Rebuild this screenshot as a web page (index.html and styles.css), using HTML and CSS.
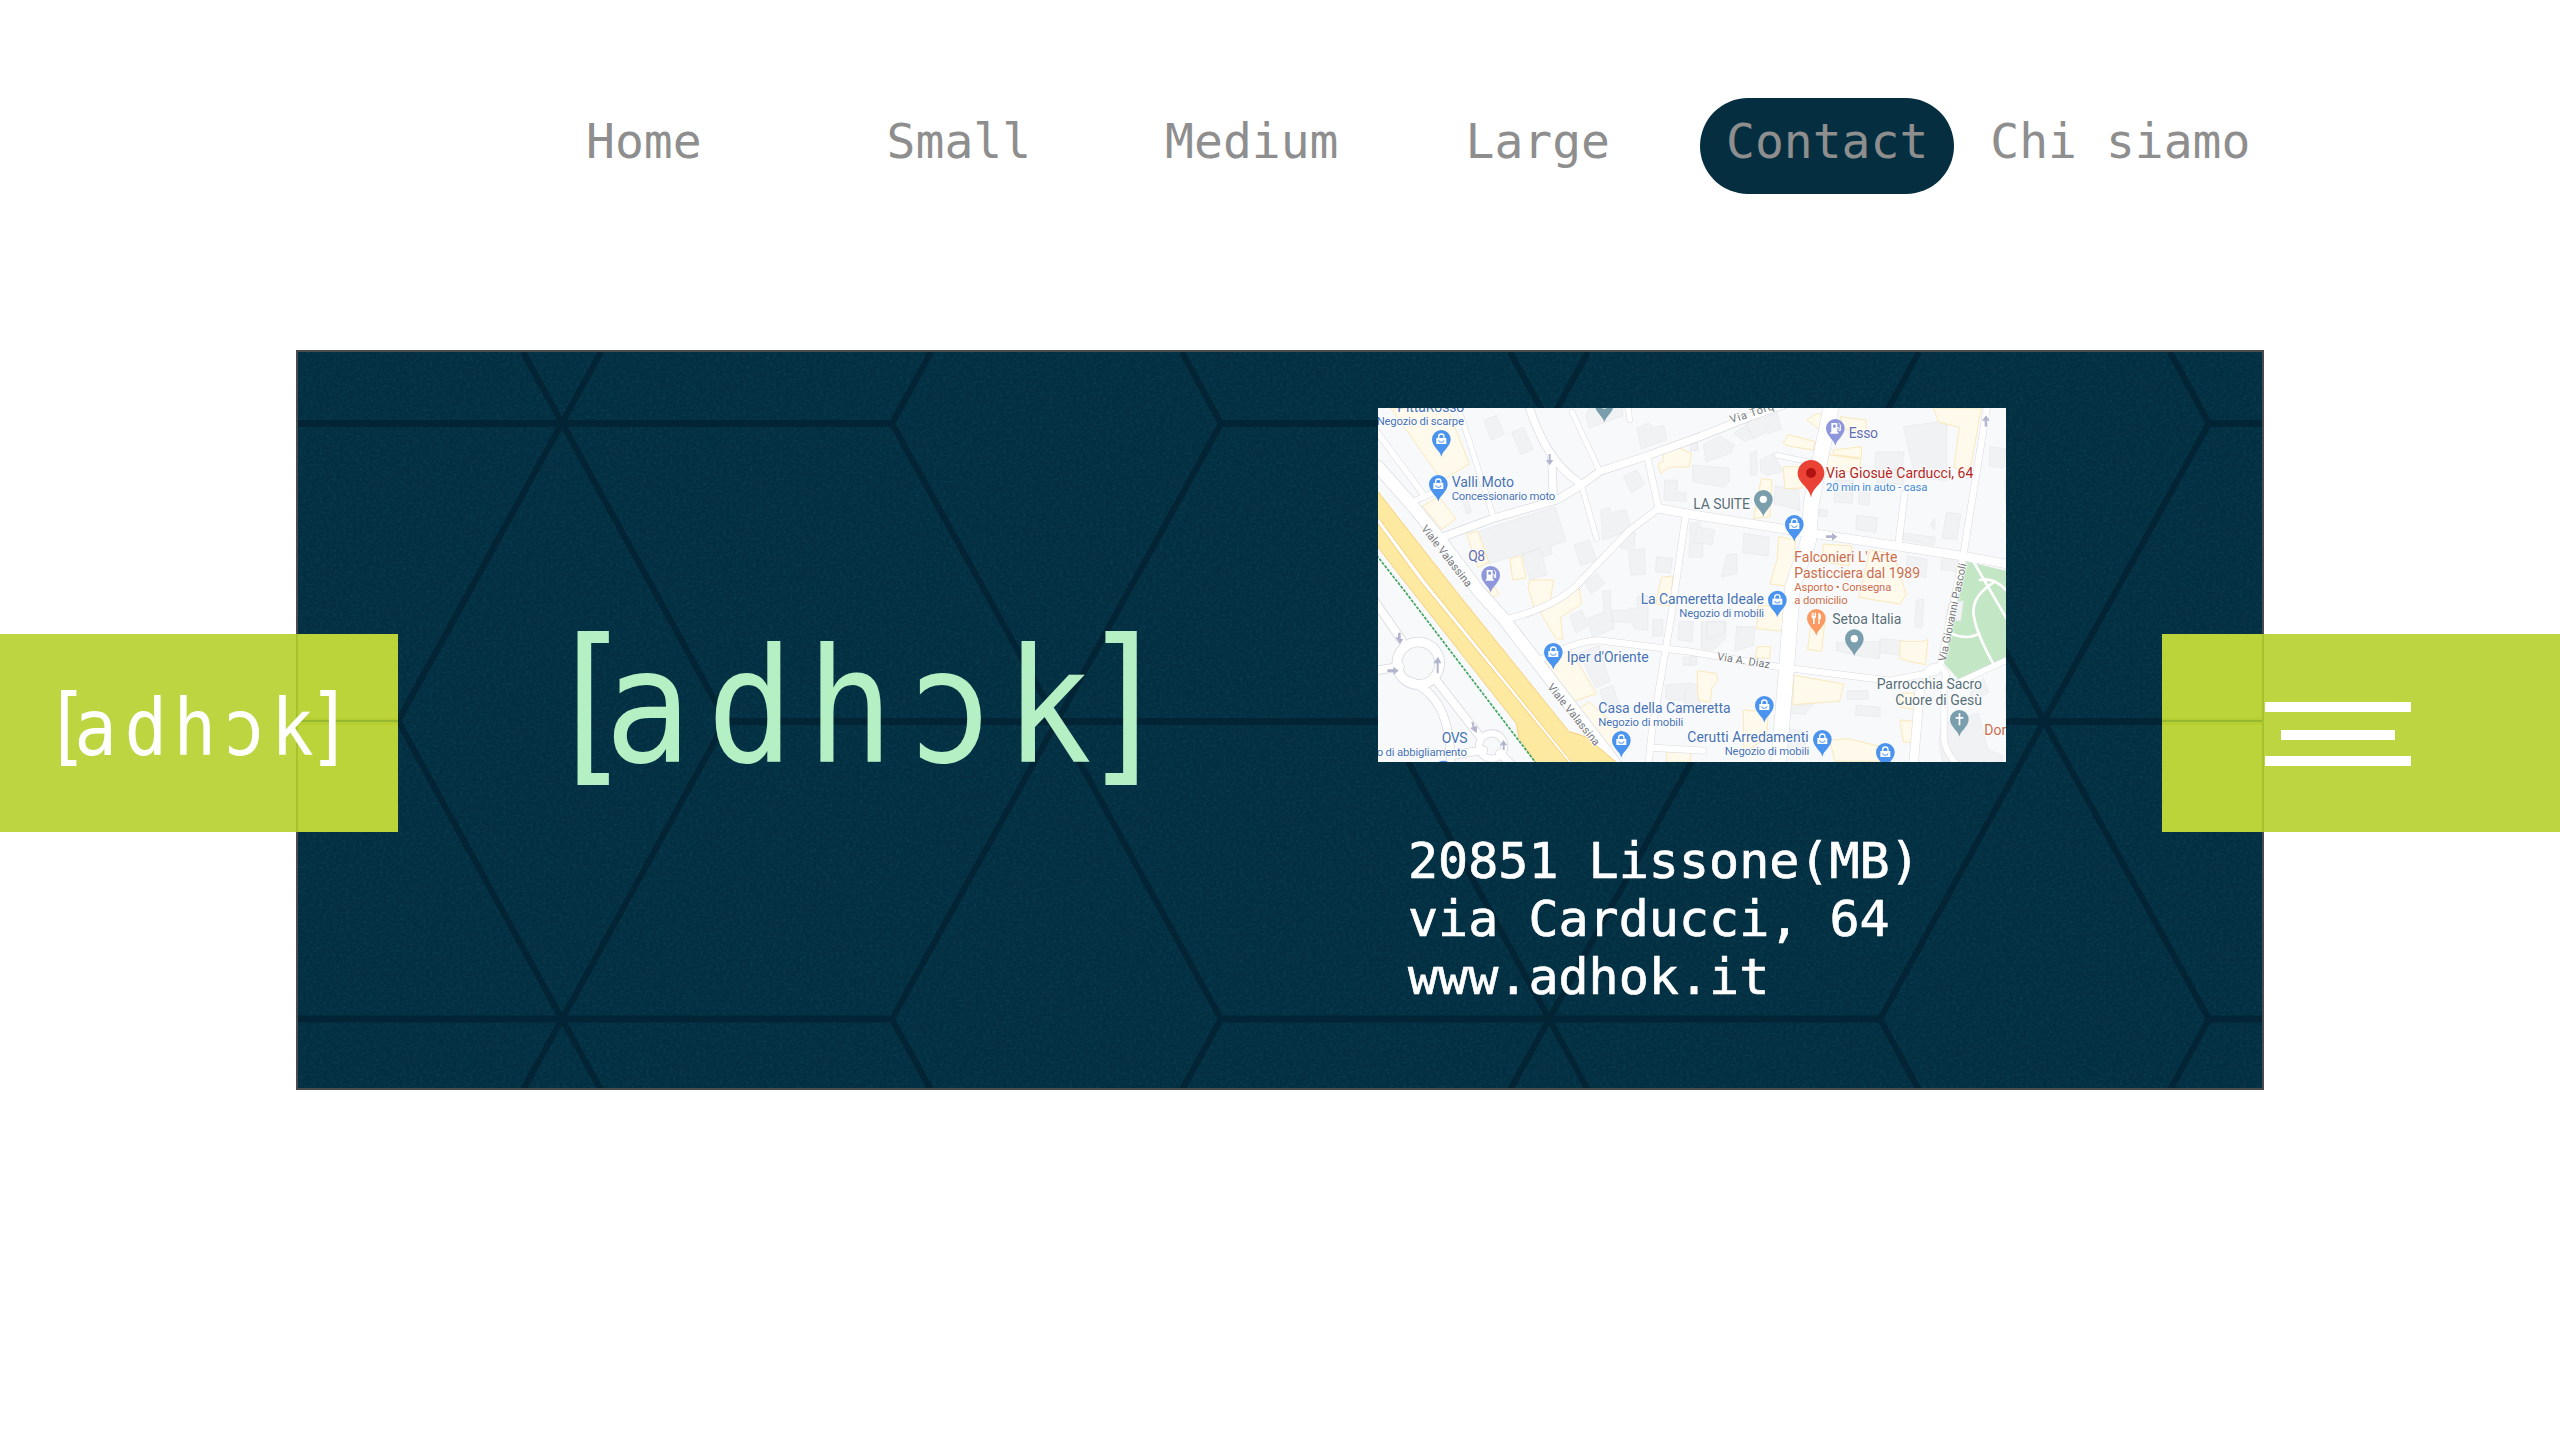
FILE: index.html
```
<!DOCTYPE html>
<html lang="it">
<head>
<meta charset="utf-8">
<title>adhok - Contact</title>
<link rel="stylesheet" href="styles.css">
</head>
<body>
<svg class="defs" aria-hidden="true">
  <defs>
    <symbol id="logo" viewBox="570 620 575 175">
      <g class="logo-bracket"><text transform="translate(543.5 762.5) scale(.87 1)">[</text><text transform="translate(1080 762.5) scale(.87 1)">]</text></g>
      <g class="logo-word" transform="translate(604.6 762.3) scale(.907 1)"><text x="0 113 223 333.5 441.5" y="0">adhɔk</text></g>
    </symbol>
    <g id="drop"><path d="M0 52C-4 34-28 22-28 0a28 28 0 0 1 56 0C28 22 4 34 0 52Z"/></g>
    <g id="shop"><use href="#drop" fill="#4a93ee"/><path fill="#fff" d="M-15-4h30v18h-30z"/><path fill="none" stroke="#fff" stroke-width="4" d="M-8-4v-4a8 8 0 0 1 16 0v4"/><path fill="none" stroke="#4a93ee" stroke-width="3" d="M-8 3a8 6 0 0 0 16 0"/></g>
    <g id="fuel"><use href="#drop" fill="#8e96dc"/><path fill="#fff" d="M-12-16h18v28h3v4h-24v-4h3z"/><path fill="#8e96dc" d="M-7-11h8v9h-8z"/><path fill="none" stroke="#fff" stroke-width="3" d="M6-2h5v9h4v-18l-5-5"/></g>
    <g id="place"><use href="#drop" fill="#7b9ead"/><circle r="11" fill="#fff"/></g>
  </defs>
</svg>

<header class="header">
  <nav class="nav">
    <a class="nav-item">Home</a>
    <a class="nav-item nav-small">Small</a>
    <a class="nav-item nav-medium">Medium</a>
    <a class="nav-item nav-large">Large</a>
    <a class="nav-item nav-active">Contact</a>
    <a class="nav-item nav-about">Chi siamo</a>
  </nav>
</header>

<main class="stage">
  <section class="panel">
    <svg class="pattern" viewBox="298 352 1964 736">
      <filter id="grain" x="0" y="0" width="1" height="1"><feTurbulence type="fractalNoise" baseFrequency=".3 .42" numOctaves="2" seed="4"/><feColorMatrix values="0 0 0 0 .02  0 0 0 0 .28  0 0 0 0 .36  1.600 0 0 0 -.62"/></filter>
      <rect x="298" y="352" width="1964" height="736" filter="url(#grain)" opacity=".17"/>
      <g fill="none" stroke="#032434" stroke-width="6">
        <path d="M523 352L726 721L523 1090M601 352L398 721L601 1090M931 352L892 423.500L1057 721L892 1019L931 1090M1182 352L1221 423.500L1057 721L1221 1019L1182 1090"/>
        <path d="M1510 352L1714 721L1510 1090M1588 352L1386 721L1588 1090M1919 352L1880 423.500L2044 721L1880 1019L1919 1090M2170 352L2209 423.500L2044 721L2209 1019L2170 1090"/>
        <path stroke-width="7" d="M298 423.500H892M1221 423.500H1880M2209 423.500H2264M298 721.500H398M726 721.500H1386M1714 721.500H2264M298 1019H892M1221 1019H1880M2209 1019H2264"/>
      </g>
    </svg>
    <svg class="brand"><use href="#logo"/></svg>
    <div class="where">
      <svg class="map" viewBox="24 24 1884 1062">
        <rect x="24" y="24" width="1884" height="1062" fill="#f8f9fb"/>
        <path fill="#c3e7c5" d="M1790 485L1908 512V780L1765 838L1722 790Z"/>
        <g class="gray">
          <path d="M342 62l38-16 22 56-38 18zM425 98l36-16 28 66-36 16zM800 85l36-16 16 14 30-6 8 42-76 28zM648 46l10-22h100v24l-100 36zM760 230l40-20 24 42-40 26zM884 240h38v36l26 2v26l-66-4zM320 396l236-76 32 104-236 68zM692 330l26-6 6 14 44-8 16 60-86 30zM756 394l40 4-4 52 32-6 2 78-44 4-6-76-24-8zM612 434l46-14 22 62-48 14zM456 462l56-18 18 80-50 16zM515 455l28-15 4 22-30 8zM860 470l48 6-8 44-44-6zM960 370l30-4v56l-30 4zM958 430h40v42h-40zM644 545l38-24 22 30-40 30zM275 295l15-5 14 46-14 5zM964 132l18-3 3 20-18 3z"/>
          <path d="M1000 135l50-28 42 28-8 24-76 26zM1092 100l36-24 24 38-30 10zM1128 70l40-24 20 50-36 20zM1180 55l40-18 14 50-40 14zM968 195l110 10 0 40-18 16-92-16zM1140 160l20-8 2 70-20 6zM960 130l20 0 4 22-24 0zM1170 180l40-20 28 54-46 12-20-12zM1216 258l70 12 4 62-54-16-24-4zM980 380l54 10-8 44-54-8zM1122 400l76 12-4 56-76-10zM1346 328l26 2-2 20-24-2zM1460 345l62 8-4 44-60-8zM1395 240h56l-4 70-54-4zM1467 276l32 4-2 36-32-4zM1600 80l130-18v180l-94-10zM1518 156h84l-6 54-82-6zM1520 210h80v44l-80-6zM1600 400l96 12-4 24-92-16zM1680 375l14-20v34zM1730 336l42 6-12 78-44-6zM1860 140l46 6-4 58-44-6zM1904 240l4 0v70zM1612 468l60 10-4 54-60-6zM1720 450l50 10-8 56-50-8zM1070 465l30-4v60l-46 10z"/>
          <path d="M600 648l36-18 18 48-36 20zM652 656l50-20-4-62 24-2 0 60 12 54-66 24zM726 630h52v-6h24v-34l32-4v104l-40-4-12-20h-56zM848 658h30v50h-30zM928 665h42l-4 60-42-6zM628 760l58-24 34 108-42 20zM690 870l38-14 20 60-40 14zM886 856l78-8-2 56-74-6zM940 772h24v24h-24z"/>
          <path d="M964 852h26v66h-46v-36zM994 666h74v46l-38 38-36-4zM1010 664h58l-8 40-50 12zM1100 680h56l-6 56-56 18zM960 770l20 0v24l-20 4zM1400 728l132-4-4 52-60-8-68-16zM1530 716l70 6-6 44-66-8zM1640 600l22-2-6 86-22-4zM1736 610l44-8-8 62-46-6zM1432 872h62v26h-62zM1460 916l70 6v28l-74-4zM1264 920l68-10-28 34-44-6zM1715 970l110-30 30 110 44 16-2 20h-180l-10-60zM1800 880l40-44 16 40-44 30zM1906 850l2 0v80zM1254 986l56 10-6 60-50-8z"/>
        </g>
        <g class="yel">
          <path d="M62 24h170l66 168-82 50-56-80zM158 318l48-28 52 66-42 32zM290 402l34-8 32 92-32 16zM420 476l34-8 14 66-40 6zM876 150l46-8 42 18-6 40-60 2-26 18-8-28 18-10zM874 532l34-4-6 90-44-6zM480 540h70l-8 60-50 22-18-60zM512 638l80-52 36-22 6 48-62 40 6 66-20-2zM505 795l90-56 84 142-100 34zM622 928l36-22 100 90-40 44-44-4zM340 580l36-18 10 22-34 16zM890 1056h72v30h-72z"/>
          <path d="M1310 60l32-20 44 10-10 46-26-6zM1240 130l14-26 80 20-4 26-76-12zM1390 150l84-10v34l-84-10zM1410 50l78 10v34l-70-8zM1240 200l54 0 4 64-54 2zM1362 162l110 16-4 40-110-10zM1174 236l32 4-6 110-50 6zM1690 24h144l-34 186-48-8 16-120-62-16zM1226 410l50 10-6 140-70-8 22-78zM1500 450l72 12 36 120-18 30-124-20 14-60zM1360 432l86 6-10 60-80-14zM1166 616l100 6-6 74-100-10zM1325 650l40 8-10 96-42-6zM1162 740h40l-4 36-42-4zM1590 724l70 0 14-6-8 76-40-8-36-10zM1272 826l150 26-14 52-140 10zM982 812l56 8 6 22-18 20-6 46-34-8-4-34zM1120 930l74 6-4 78-68 44zM1590 960l60 6-6 62-44-2zM1380 1020l54-4 100 24v44h-140zM1588 880l60-2v52l-56-8z"/>
        </g>
        <g class="casing">
          <path stroke-width="40" d="M24 200L130 320L205 412L325 572L400 655L500 785L750 1110"/>
          <path stroke-width="20" d="M20 95L165 290M110 312L190 278"/>
          <path stroke-width="26" d="M205 416L370 355L560 300L630 258L690 214L830 168L990 110L1140 50L1240 15M475 15C500 90 540 190 630 250M545 170L550 290"/>
          <path stroke-width="18" d="M262 15L300 130L370 350M606 36L685 205M636 262L680 416M774 15L779 60M1222 166L1340 190"/>
          <path stroke-width="22" d="M832 170L866 325L780 390L640 535Q570 620 400 660M948 340L905 640L880 790L845 1000L835 1100M500 785Q620 720 690 721L960 755L1220 800L1560 842L1700 815M1852 15L1780 465L1710 800M1604 280L1586 425M840 1043L1000 1052"/>
          <path stroke-width="29" d="M866 325L960 343L1260 390L1560 435L1790 470L1920 494M1650 860L1630 1100"/>
          <path stroke-width="48" d="M1386 10L1350 180L1324 310L1316 420L1268 560L1250 800L1225 1100"/>
          <path stroke-width="20" d="M1722 850V1020Q1730 1070 1780 1110M1760 850L1910 780"/>
          <circle cx="1698" cy="830" r="30" stroke-width="22"/>
          <path stroke-width="28" d="M15 605L95 720M15 812L90 800M190 830L330 1010M110 840C200 870 245 950 242 1110M390 1060L440 1110M250 1065L340 1050"/>
          <circle cx="145" cy="790" r="64" stroke-width="32"/><circle cx="365" cy="1038" r="38" stroke-width="24"/>
        </g>
        <g class="roads">
          <path stroke-width="36" d="M24 200L130 320L205 412L325 572L400 655L500 785L750 1110"/>
          <path stroke-width="17" d="M20 95L165 290M110 312L190 278"/>
          <path stroke-width="22" d="M205 416L370 355L560 300L630 258L690 214L830 168L990 110L1140 50L1240 15M475 15C500 90 540 190 630 250M545 170L550 290"/>
          <path stroke-width="15" d="M262 15L300 130L370 350M606 36L685 205M636 262L680 416M774 15L779 60M1222 166L1340 190"/>
          <path stroke-width="19" d="M832 170L866 325L780 390L640 535Q570 620 400 660M948 340L905 640L880 790L845 1000L835 1100M500 785Q620 720 690 721L960 755L1220 800L1560 842L1700 815M1852 15L1780 465L1710 800M1604 280L1586 425M840 1043L1000 1052"/>
          <path stroke-width="26" d="M866 325L960 343L1260 390L1560 435L1790 470L1920 494M1650 860L1630 1100"/>
          <path stroke-width="45" d="M1386 10L1350 180L1324 310L1316 420L1268 560L1250 800L1225 1100"/>
          <path stroke-width="17" d="M1722 850V1020Q1730 1070 1780 1110M1760 850L1910 780"/>
          <circle cx="1698" cy="830" r="30" stroke-width="19"/>
          <path stroke-width="23" d="M15 605L95 720M15 812L90 800M190 830L330 1010M110 840C200 870 245 950 242 1110M390 1060L440 1110M250 1065L340 1050"/>
          <circle cx="145" cy="790" r="64" stroke-width="27"/><circle cx="365" cy="1038" r="38" stroke-width="19"/>
          <path stroke-width="8" d="M1810 484L1912 660M1875 545Q1800 590 1812 650Q1820 700 1868 788M1742 700Q1790 722 1828 700M1830 540Q1870 530 1908 570"/>
        </g>
        <path fill="#fff" d="M24 340L170 540L605 1086H595L150 540L24 375Z"/>
        <g fill="#fee9a0" stroke="#f6cf7c" stroke-width="3">
          <path d="M20 270L255 570L597 995Q620 1000 650 1012L745 1092H610L170 548L20 346Z"/>
          <path d="M20 366L148 540L600 1092H500L446 1012L440 972L100 540L20 436Z"/>
        </g>
        <path fill="none" stroke="#3fa660" stroke-width="5" stroke-dasharray="9 4" d="M20 466L100 568L500 1092"/>
        <g fill="#b3b5cf">
          <path d="M536 162h6v18h8l-11 16-11-16h8z"/>
          <path d="M1368 406h18v-8l16 12-16 12v-8h-18zM1844 80v-18h-8l12-16 11 16h-8v18zM52 808h18v-8l16 12-16 12v-8h-18zM200 820v-30h-10l14-20 10 20h-8v30zM84 698v14h-8l14 20 10-14-8-2v-18zM304 966l4 16-8 2 20 16 2-22-8 2-4-14zM398 1050v-14h-8l10-16 12 16h-8v14z"/>
        </g>
        <g class="street">
          <text transform="translate(152 386) rotate(52)" textLength="225">Viale Valassina</text>
          <text transform="translate(531 862) rotate(51)" textLength="228">Viale Valassina</text>
          <text transform="translate(1084 70) rotate(-18)" textLength="136">Via Torq</text>
          <text transform="translate(1040 780) rotate(9)" textLength="160">Via A. Diaz</text>
          <text transform="translate(1727 786) rotate(-78)" textLength="300">Via Giovanni Pascoli</text>
        </g>
        <use href="#shop" x="214" y="118"/><use href="#shop" x="205" y="253"/><use href="#shop" x="550" y="757"/>
        <use href="#shop" x="754" y="1021"/><use href="#shop" x="1273" y="373"/><use href="#shop" x="1222" y="600"/>
        <use href="#shop" x="1183" y="916"/><use href="#shop" x="1357" y="1018"/><use href="#shop" x="1546" y="1057"/>
        <use href="#shop" x="220" y="1110"/><use href="#fuel" x="362" y="526"/><use href="#fuel" x="1396" y="85"/>
        <use href="#place" x="703" y="15"/><use href="#place" x="1180" y="298"/><use href="#place" x="1453" y="716"/>
        <use href="#drop" x="1768" y="958" fill="#7b9ead"/><path fill="#fff" d="M1766 940h5v11h9v5h-9v20h-5v-20h-9v-5h9z"/>
        <use href="#drop" x="1339" y="655" fill="#fc9a63"/>
        <path fill="#fff" d="M1325 638h3v10h2v-10h3v10h2v-10h3v14l-4 4v16h-5v-16l-4-4zM1345 672v-34q8 2 8 12v8h-4v14z"/>
        <path fill="#ea4335" d="M1323 293C1318 260 1283 250 1283 220a40 40 0 0 1 80 0C1363 250 1328 260 1323 293Z"/><circle cx="1323" cy="219" r="15" fill="#b11313"/>
        <g class="big blue">
          <text x="82" y="37" textLength="201">PittaRosso</text><text x="245" y="261" textLength="187">Valli Moto</text>
          <text x="812" y="612" textLength="370">La Cameretta Ideale</text><text x="590" y="787" textLength="246">Iper d'Oriente</text>
          <text x="685" y="939" textLength="397">Casa della Cameretta</text><text x="215" y="1029" textLength="78">OVS</text>
          <text x="952" y="1026" textLength="364">Cerutti Arredamenti</text>
          <text class="violet" x="295" y="484" textLength="50">Q8</text><text class="violet" x="1436" y="114" textLength="88">Esso</text>
        </g>
        <g class="little blue">
          <text x="20" y="74" textLength="262">Negozio di scarpe</text><text x="245" y="300" textLength="311">Concessionario moto</text>
          <text x="928" y="650" textLength="254">Negozio di mobili</text><text x="685" y="978" textLength="255">Negozio di mobili</text>
          <text x="20" y="1067" textLength="271">o di abbigliamento</text><text x="1064" y="1065" textLength="254">Negozio di mobili</text>
          <text class="route" x="1368" y="272" textLength="304">20 min in auto - casa</text>
        </g>
        <g class="big slate">
          <text x="970" y="327" textLength="170">LA SUITE</text><text x="1387" y="672" textLength="207">Setoa Italia</text>
          <text x="1520" y="867" textLength="316">Parrocchia Sacro</text><text x="1576" y="915" textLength="260">Cuore di Gesù</text>
          <text class="target" x="1368" y="234" textLength="442">Via Giosuè Carducci, 64</text>
        </g>
        <g class="big food">
          <text x="1273" y="486" textLength="309">Falconieri L' Arte</text><text x="1273" y="534" textLength="377">Pasticciera dal 1989</text>
          <text x="1843" y="1005">Dor</text>
        </g>
        <g class="little food"><text x="1273" y="572" textLength="291">Asporto • Consegna</text><text x="1273" y="611" textLength="160">a domicilio</text></g>
      </svg>
      <address class="address">20851 Lissone(MB)<br>via Carducci, 64<br>www.adhok.it</address>
    </div>
  </section>

  <div class="tab tab-left"><svg class="tab-logo"><use href="#logo"/></svg></div>
  <div class="tab tab-right">
    <span class="bar"></span><span class="bar bar-short"></span><span class="bar"></span>
  </div>
</main>
</body>
</html>
```
FILE: styles.css
```
* { box-sizing: border-box; }
body {
  margin: 0;
  height: 1440px;
  overflow: hidden;
  background: #fff;
  font-family: "DejaVu Sans Mono", monospace;
}
.defs { position: absolute; width: 0; height: 0; }

/* Navigation */
.header { height: 350px; padding: 98px 0 0 560px; }
.nav { display: flex; }
.nav-item {
  height: 96px;
  padding: 15px 26px 25px;
  border-radius: 50px;
  color: #8e8e8e;
  font-size: 48px;
  line-height: 56px;
  white-space: nowrap;
}
.nav-small { margin-left: 133px; }
.nav-medium { margin-left: 82px; }
.nav-large { margin-left: 75px; }
.nav-active { margin-left: 64px; background: #052e40; }
.nav-about { margin-left: 10px; }

/* Card */
.stage { position: relative; padding: 0 296px; }
.panel {
  position: relative;
  display: flex;
  height: 740px;
  border: 2px solid #494c4e;
  background: #042e41;
}
.pattern { position: absolute; inset: 0; width: 100%; height: 100%; }
.brand { position: relative; width: 575px; height: 175px; margin: 268px 0 0 272px; color: #b5f0c4; }
.logo-bracket { font-size: 173.3px; fill: currentColor; }
.logo-word { font-size: 158.8px; fill: currentColor; }
.where { position: relative; margin: 56px 0 0 233px; }
.map { display: block; width: 628px; height: 354px; font-family: Roboto, sans-serif; }
.address {
  padding: 70px 0 0 30px;
  color: #fff;
  font-size: 50px;
  font-style: normal;
  line-height: 58px;
  white-space: nowrap;
  -webkit-text-stroke: .7px #fff;
}

/* Map drawing */
.gray { fill: #f1f2f4; stroke: #e7e9ec; stroke-width: 2; }
.yel { fill: #fffaec; stroke: #fbe9bb; stroke-width: 3; }
.casing { fill: none; stroke: #d7dae0; stroke-linejoin: round; stroke-linecap: round; }
.roads { fill: none; stroke: #fff; stroke-linejoin: round; stroke-linecap: round; }
.big { font-size: 42px; }
.little { font-size: 34px; }
.street { font-size: 33px; fill: #74777b; stroke: #fff; stroke-width: 4; paint-order: stroke; }
.blue, .slate, .food { stroke: #fff; stroke-width: 4; paint-order: stroke; }
.blue { fill: #4672b4; }
.violet { fill: #626cb0; }
.route { fill: #4186d6; }
.slate { fill: #566e78; }
.target { fill: #b5261e; }
.food { fill: #cb6b48; }

/* Side tabs */
.tab { position: absolute; top: 284px; width: 398px; height: 198px; }
.tab-left {
  left: 0;
  padding: 51px 0 0 57px;
  background:
    linear-gradient(#a5c32e, #a5c32e) 296px 0 / 2px 100% no-repeat,
    linear-gradient(transparent 84px, #b6ce2f 84px 86px, #96b831 86px 88px, #b6ce2f 88px 91px, transparent 91px) 298px 0 / 100px 100% no-repeat,
    linear-gradient(90deg, #bdd541 298px, #bad43a 298px);
}
.tab-logo { display: block; width: 283px; height: 86px; color: #fff; }
.tab-right {
  right: 0;
  display: flex;
  flex-direction: column;
  gap: 17px;
  align-items: center;
  padding: 68px 149px 0 103px;
  background:
    linear-gradient(#a5c32e, #a5c32e) 100px 0 / 2px 100% no-repeat,
    linear-gradient(transparent 84px, #b6ce2f 84px 86px, #96b831 86px 88px, #b6ce2f 88px 91px, transparent 91px) 0 0 / 100px 100% no-repeat,
    linear-gradient(90deg, #bad43a 100px, #bdd541 100px);
}
.bar { width: 146px; height: 10px; background: #fff; }
.bar-short { width: 114px; margin-top: 1px; margin-bottom: -1px; }
```
